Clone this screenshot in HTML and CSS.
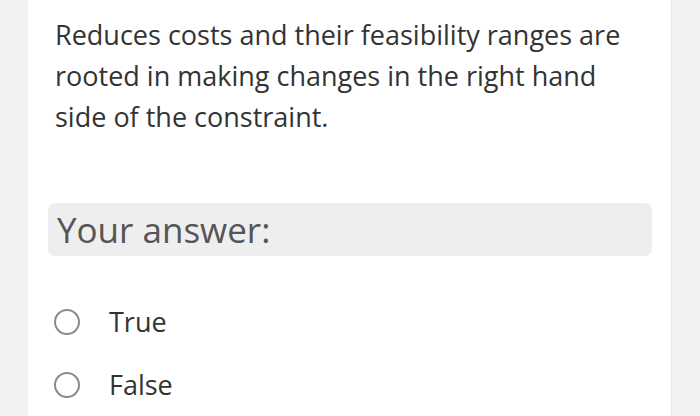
FILE: index.html
```html
<!DOCTYPE html>
<html>
<head>
<meta charset="utf-8">
<link rel="stylesheet" href="styles.css">
</head>
<body>
<div class="page">
  <div class="card">
    <p class="question">Reduces costs and their feasibility ranges are rooted in making changes in the right hand side of the constraint.</p>
    <div class="answer">Your answer:</div>
    <ul class="options">
      <li class="option"><span class="radio"></span><span class="label">True</span></li>
      <li class="option"><span class="radio"></span><span class="label">False</span></li>
    </ul>
  </div>
</div>
</body>
</html>
```
FILE: styles.css
```css
html, body {
  margin: 0;
  padding: 0;
  background: #f2f2f2;
  font-family: "Open Sans", "Liberation Sans", sans-serif;
}
.page {
  width: 700px;
  height: 416px;
  overflow: hidden;
  padding-left: 28px;
  box-sizing: border-box;
}
.card {
  width: 644px;
  height: 416px;
  background: #fff;
  border-right: 1px solid #e6e6e6;
  box-sizing: border-box;
  padding: 14px 19px 0 20px;
}
.question {
  margin: 0 0 0 7px;
  font-size: 27px;
  line-height: 41px;
  color: #333;
}
.answer {
  margin-top: 66px;
  height: 53px;
  background: #eeeeee;
  border-radius: 7px;
  font-size: 35px;
  line-height: 53px;
  color: #555;
  padding-left: 9px;
}
.options {
  list-style: none;
  margin: 34px 0 0 0;
  padding: 0;
}
.option {
  display: flex;
  align-items: center;
  height: 63px;
  margin-left: 6px;
}
.radio {
  width: 26px;
  height: 26px;
  border: 2.5px solid #8a8a8a;
  border-radius: 50%;
  box-sizing: border-box;
}
.label {
  margin-left: 29px;
  font-size: 27px;
  color: #333;
}
```
